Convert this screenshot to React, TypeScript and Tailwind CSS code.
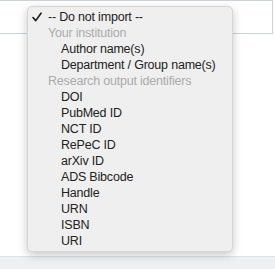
import React from 'react';

type Item = { label: string; kind: 'checked' | 'group' | 'option' };

const items: Item[] = [
  { label: '-- Do not import --', kind: 'checked' },
  { label: 'Your institution', kind: 'group' },
  { label: 'Author name(s)', kind: 'option' },
  { label: 'Department / Group name(s)', kind: 'option' },
  { label: 'Research output identifiers', kind: 'group' },
  { label: 'DOI', kind: 'option' },
  { label: 'PubMed ID', kind: 'option' },
  { label: 'NCT ID', kind: 'option' },
  { label: 'RePeC ID', kind: 'option' },
  { label: 'arXiv ID', kind: 'option' },
  { label: 'ADS Bibcode', kind: 'option' },
  { label: 'Handle', kind: 'option' },
  { label: 'URN', kind: 'option' },
  { label: 'ISBN', kind: 'option' },
  { label: 'URI', kind: 'option' },
];

const App: React.FC = () => {
  return (
    <div className="relative w-[275px] h-[269px] bg-white overflow-hidden font-['Liberation_Sans',Arial,sans-serif]">
      {/* table cell behind the menu */}
      <div className="h-[34px] w-[273px] border-t border-r border-b border-[#c9d3da]" />
      <div className="h-[222px]" />
      {/* footer band */}
      <div className="h-[13px] bg-[#eef1f3] border-t border-[#dde2e6]" />

      {/* open select menu */}
      <div className="absolute left-[27px] top-[6px] w-[206px] rounded-[5px] bg-[#efefef] border border-[#d6d6d6] shadow-[0_3px_10px_rgba(0,0,0,0.22)] pt-[2px] pb-[2px]">
        {items.map((item) => (
          <div
            key={item.label}
            className={`h-4 flex items-center text-[12.5px] tracking-[-0.2px] leading-4 whitespace-nowrap ${
              item.kind === 'group' ? 'text-[#ababab] pl-[20px]' : item.kind === 'checked' ? 'text-[#222] pl-[4px]' : 'text-[#222] pl-[33px]'
            }`}
          >
            {item.kind === 'checked' && (
              <svg width="10" height="10" viewBox="0 0 10 10" className="mr-[6px]">
                <path d="M1 5.5 L3.8 8.6 L9 1.2" fill="none" stroke="#1a1a1a" strokeWidth="1.6" strokeLinecap="round" strokeLinejoin="round" />
              </svg>
            )}
            {item.label}
          </div>
        ))}
      </div>
    </div>
  );
};

export default App;
